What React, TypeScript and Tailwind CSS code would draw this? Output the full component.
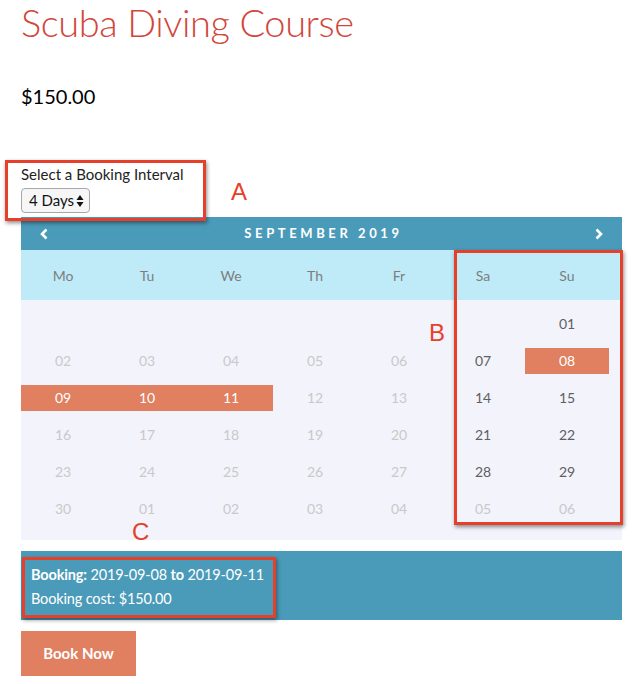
import React from "react";

type Cell = { d: string; tone: "dim" | "dark" | "hl" | "empty" };

const rows: Cell[][] = [
  [
    { d: "", tone: "empty" },
    { d: "", tone: "empty" },
    { d: "", tone: "empty" },
    { d: "", tone: "empty" },
    { d: "", tone: "empty" },
    { d: "", tone: "empty" },
    { d: "01", tone: "dark" },
  ],
  [
    { d: "02", tone: "dim" },
    { d: "03", tone: "dim" },
    { d: "04", tone: "dim" },
    { d: "05", tone: "dim" },
    { d: "06", tone: "dim" },
    { d: "07", tone: "dark" },
    { d: "08", tone: "hl" },
  ],
  [
    { d: "09", tone: "hl" },
    { d: "10", tone: "hl" },
    { d: "11", tone: "hl" },
    { d: "12", tone: "dim" },
    { d: "13", tone: "dim" },
    { d: "14", tone: "dark" },
    { d: "15", tone: "dark" },
  ],
  [
    { d: "16", tone: "dim" },
    { d: "17", tone: "dim" },
    { d: "18", tone: "dim" },
    { d: "19", tone: "dim" },
    { d: "20", tone: "dim" },
    { d: "21", tone: "dark" },
    { d: "22", tone: "dark" },
  ],
  [
    { d: "23", tone: "dim" },
    { d: "24", tone: "dim" },
    { d: "25", tone: "dim" },
    { d: "26", tone: "dim" },
    { d: "27", tone: "dim" },
    { d: "28", tone: "dark" },
    { d: "29", tone: "dark" },
  ],
  [
    { d: "30", tone: "dim" },
    { d: "01", tone: "dim" },
    { d: "02", tone: "dim" },
    { d: "03", tone: "dim" },
    { d: "04", tone: "dim" },
    { d: "05", tone: "dim" },
    { d: "06", tone: "dim" },
  ],
];

const days = ["Mo", "Tu", "We", "Th", "Fr", "Sa", "Su"];

function cellClass(tone: Cell["tone"]) {
  if (tone === "hl") return "flex h-[26px] items-center justify-center bg-[#e08060] text-[14px] text-white";
  if (tone === "dark") return "flex h-[26px] items-center justify-center text-[14px] text-[#5f5f5f]";
  return "flex h-[26px] items-center justify-center text-[14px] text-[#c9c9c9]";
}

export default function App() {
  return (
    <div
      className="relative w-[633px] h-[684px] bg-white overflow-hidden"
      style={{ fontFamily: "Lato, 'Open Sans', sans-serif" }}
    >
      <div className="flex flex-col items-start pl-[21px] pr-[11px]">
        <h1 className="text-[38px] leading-[44px] font-light text-[#d2463c] tracking-[-0.4px]">
          Scuba Diving Course
        </h1>
        <div className="mt-[40px] text-[20px] leading-[24px] text-black">$150.00</div>

        <div className="mt-[56px] text-[15px] leading-[20px] text-[#222]">Select a Booking Interval</div>
        <div className="mt-[4px] flex h-[25px] w-[69px] items-center justify-between rounded-[4px] border border-[#a8a8a8] bg-[#f6f6f6] pl-[7px] pr-[5px] text-[15px] text-[#111]">
          <span>4 Days</span>
          <svg width="8" height="14" viewBox="0 0 8 14">
            <path d="M4 1 L7.5 6 L0.5 6 Z" fill="#111" />
            <path d="M4 13 L7.5 8 L0.5 8 Z" fill="#111" />
          </svg>
        </div>

        {/* Calendar */}
        <div className="mt-[4px] w-[601px]">
          <div className="flex h-[33px] items-center justify-between bg-[#4a9ab9] px-[18px] text-white">
            <svg width="10" height="12" viewBox="0 0 10 12">
              <path d="M7.5 1.5 L3 6 L7.5 10.5" stroke="white" strokeWidth="2.6" fill="none" />
            </svg>
            <span className="text-[13px] font-bold tracking-[3.6px] pl-[4px]">SEPTEMBER 2019</span>
            <svg width="10" height="12" viewBox="0 0 10 12">
              <path d="M2.5 1.5 L7 6 L2.5 10.5" stroke="white" strokeWidth="2.6" fill="none" />
            </svg>
          </div>
          <div className="grid h-[50px] grid-cols-[repeat(7,84px)] items-center bg-[#bfebf8] text-[14px] text-[#7d7d7d]">
            {days.map((d) => (
              <div key={d} className="text-center">
                {d}
              </div>
            ))}
          </div>
          <div className="bg-[#f3f3fc] pt-[5px] pb-[13px]">
            {rows.map((r, i) => (
              <div key={i} className="grid h-[37px] grid-cols-[repeat(7,84px)] items-center">
                {r.map((c, j) => (
                  <div key={j} className={cellClass(c.tone)}>
                    {c.d}
                  </div>
                ))}
              </div>
            ))}
          </div>
        </div>

        <div className="mt-[11px] w-[601px] bg-[#4a9ab9] pl-[10px] pt-[12px] pb-[9px] text-[14.5px] leading-[24px] tracking-[-0.15px] text-white">
          <div>
            <b>Booking:</b> 2019-09-08 <b>to</b> 2019-09-11
          </div>
          <div>Booking cost: $150.00</div>
        </div>

        <button className="mt-[11px] h-[45px] w-[115px] bg-[#e08060] text-[15px] font-bold text-white">
          Book Now
        </button>
      </div>

      {/* annotations */}
      <div className="absolute left-[5px] top-[160px] h-[61px] w-[201px] border-[3.5px] border-[#e6402b] shadow-[1px_2px_4px_rgba(0,0,0,0.45)]" />
      <div className="absolute left-[454px] top-[250px] h-[275px] w-[169px] border-[3.5px] border-[#e6402b] shadow-[1px_2px_4px_rgba(0,0,0,0.45)]" />
      <div className="absolute left-[22px] top-[557px] h-[61px] w-[254px] border-[3.5px] border-[#e6402b] shadow-[1px_2px_4px_rgba(0,0,0,0.45)]" />
      <div
        className="absolute left-[231px] top-[174px] text-[24px] text-[#e6402b]"
        style={{ fontFamily: "'Liberation Sans', sans-serif" }}
      >
        A
      </div>
      <div
        className="absolute left-[429px] top-[315px] text-[24px] text-[#e6402b]"
        style={{ fontFamily: "'Liberation Sans', sans-serif" }}
      >
        B
      </div>
      <div
        className="absolute left-[132px] top-[514px] text-[24px] text-[#e6402b]"
        style={{ fontFamily: "'Liberation Sans', sans-serif" }}
      >
        C
      </div>
    </div>
  );
}
